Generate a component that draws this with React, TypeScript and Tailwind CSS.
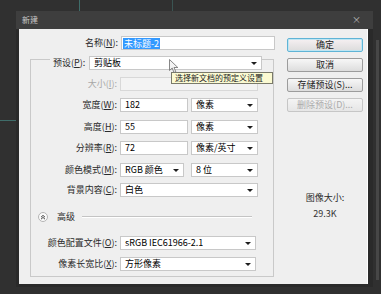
import React from 'react';

const Arrow: React.FC = () => (
  <span className="w-0 h-0 border-x-[3px] border-x-transparent border-t-[3px] border-t-[#1e1e1e]" />
);

const Select: React.FC<{ w: string; children?: React.ReactNode }> = ({ w, children }) => (
  <div className={`${w} h-[14px] bg-white border border-[#c8c8c8] flex items-center justify-between pl-[4px] pr-[4px] shrink-0`}>
    <span className="truncate">{children}</span>
    <Arrow />
  </div>
);

const Field: React.FC<{ w: string; children?: React.ReactNode; disabled?: boolean }> = ({ w, children, disabled }) => (
  <div
    className={`${w} h-[14px] border flex items-center pl-[4px] shrink-0 ${
      disabled ? 'bg-[#f3f3f3] border-[#d8d8d8]' : 'bg-white border-[#c8c8c8]'
    }`}
  >
    {children}
  </div>
);

const Row: React.FC<{ label: React.ReactNode; mt: string; dim?: boolean; children: React.ReactNode }> = ({
  label,
  mt,
  dim,
  children,
}) => (
  <div className={`${mt} h-[14px] flex items-center`}>
    <span className={`w-[86px] text-right shrink-0 ${dim ? 'text-[#a8a8a8]' : 'text-[#2a2a2a]'}`}>{label}</span>
    <div className="ml-[3px] flex items-center">{children}</div>
  </div>
);

const Button: React.FC<{ primary?: boolean; disabled?: boolean; children: React.ReactNode }> = ({
  primary,
  disabled,
  children,
}) => (
  <div
    className={`h-[14px] w-[76px] flex items-center justify-center rounded-[2px] border bg-gradient-to-b ${
      primary
        ? 'border-[#5fb4d6] from-[#f6f0f2] to-[#dcdcdc] shadow-[inset_0_0_0_1px_#bfe6f3] text-[#222]'
        : disabled
        ? 'border-[#c6c6c6] from-[#f4f4f4] to-[#e6e6e6] text-[#ababab]'
        : 'border-[#9c9c9c] from-[#f7f7f7] to-[#dddddd] text-[#222]'
    }`}
  >
    {children}
  </div>
);

export default function App() {
  return (
    <div className="relative w-[381px] h-[294px] overflow-hidden bg-[#303030] pt-[11px] pl-[16px] font-['Noto_Sans_CJK_SC',sans-serif] text-[9px] leading-[14px]">
      {/* canvas guides behind the dialog */}
      <div className="absolute left-[79px] top-0 w-px h-[11px] bg-[#3f6d6a]" />
      <div className="absolute left-[172px] top-0 w-px h-[11px] bg-[#3a5452]" />
      <div className="absolute left-0 top-[120px] w-[16px] h-px bg-[#3f6d6a]" />
      <div className="absolute left-[376px] top-[40px] w-[3px] h-[240px] bg-[#474747]" />

      <div className="w-[357px] h-[276px] bg-[#2a2a2a] flex flex-col pl-[3px] pr-[5px] pb-[3px]">
        {/* title bar */}
        <div className="h-[18px] -ml-[3px] -mr-[5px] bg-[#3e3e3e] flex items-center justify-between pl-[6px] pr-[12px] text-[8px] text-[#c8c8c8]">
          <span>新建</span>
          <span className="text-[9px] text-[#bdbdbd]">×</span>
        </div>

        {/* client */}
        <div className="relative flex-1 bg-[#efefef] border-r border-r-white flex">
          <div className="w-[256px] flex flex-col">
            <div className="mt-[7px] h-[14px] flex items-center">
              <span className="w-[99px] text-right text-[#2a2a2a]">
                名称(<u>N</u>):
              </span>
              <div className="ml-[3px] w-[154px] h-[14px] bg-white border border-[#c8c8c8] flex items-center pl-[1px]">
                <span className="bg-[#3399ff] text-white px-[1px] leading-[11px]">未标题-2</span>
              </div>
            </div>

            <div className="ml-[11px] mt-[9px] w-[244px] h-[218px] border border-[#c9c9c9] flex flex-col">
              <div className="-mt-[4px] h-[14px] flex items-center">
                <span className="ml-[19px] w-[39px] pl-[3px] bg-[#efefef] text-[#2a2a2a]">
                  预设(<u>P</u>):
                </span>
                <Select w="w-[173px]">剪贴板</Select>
              </div>

              <Row mt="mt-[7px]" dim label={<>大小(<u>I</u>):</>}>
                <Field w="w-[138px]" disabled />
              </Row>
              <Row mt="mt-[7px]" label={<>宽度(<u>W</u>):</>}>
                <Field w="w-[68px]">182</Field>
                <div className="ml-[3px]">
                  <Select w="w-[67px]">像素</Select>
                </div>
              </Row>
              <Row mt="mt-[8px]" label={<>高度(<u>H</u>):</>}>
                <Field w="w-[68px]">55</Field>
                <div className="ml-[3px]">
                  <Select w="w-[67px]">像素</Select>
                </div>
              </Row>
              <Row mt="mt-[7px]" label={<>分辨率(<u>R</u>):</>}>
                <Field w="w-[68px]">72</Field>
                <div className="ml-[3px]">
                  <Select w="w-[67px]">像素/英寸</Select>
                </div>
              </Row>
              <Row mt="mt-[8px]" label={<>颜色模式(<u>M</u>):</>}>
                <Select w="w-[64px]">RGB 颜色</Select>
                <div className="ml-[7px]">
                  <Select w="w-[67px]">8 位</Select>
                </div>
              </Row>
              <Row mt="mt-[6px]" label={<>背景内容(<u>C</u>):</>}>
                <Select w="w-[138px]">白色</Select>
              </Row>

              <div className="mt-[13px] h-[14px] flex items-center">
                <svg className="ml-[7px]" width="10" height="10" viewBox="0 0 10 10">
                  <circle cx="5" cy="5" r="4.5" fill="#fbfbfb" stroke="#b4b4b4" />
                  <path d="M3 5.2 L5 3.4 L7 5.2 M3 7.2 L5 5.4 L7 7.2" fill="none" stroke="#333" strokeWidth="0.9" />
                </svg>
                <span className="ml-[9px] text-[#2a2a2a]">高级</span>
                <div className="ml-[7px] w-[170px] h-[2px] border-t border-t-[#c4c4c4] border-b border-b-white" />
              </div>

              <Row mt="mt-[12px]" label={<>颜色配置文件(<u>O</u>):</>}>
                <Select w="w-[136px]">sRGB IEC61966-2.1</Select>
              </Row>
              <Row mt="mt-[7px]" label={<>像素长宽比(<u>X</u>):</>}>
                <Select w="w-[136px]">方形像素</Select>
              </Row>
            </div>
          </div>

          <div className="ml-[12px] w-[76px] flex flex-col">
            <div className="mt-[9px] flex flex-col gap-[6px]">
              <Button primary>确定</Button>
              <Button>取消</Button>
              <Button>存储预设(S)...</Button>
              <Button disabled>删除预设(D)...</Button>
            </div>
            <div className="mt-[79px] text-center text-[#2a2a2a]">图像大小:</div>
            <div className="mt-[2px] text-center text-[#333]">29.3K</div>
          </div>

          {/* tooltip + pointer over the preset menu */}
          <div className="absolute left-[152px] top-[43px] w-[102px] h-[12px] bg-[#fbfad2] border border-[#7a7a6a] flex items-center pl-[3px] text-[8px] leading-[10px] text-[#222] whitespace-nowrap">
            选择新文档的预定义设置
          </div>
          <svg className="absolute left-[150px] top-[30px]" width="11" height="15" viewBox="0 0 11 15">
            <path d="M0.5 0.5 L0.5 11.5 L3.2 9 L5 13.5 L6.8 12.8 L5 8.5 L8.8 8.5 Z" fill="#f4f4f4" stroke="#6a6a6a" strokeWidth="0.8" />
          </svg>
        </div>
      </div>
    </div>
  );
}
